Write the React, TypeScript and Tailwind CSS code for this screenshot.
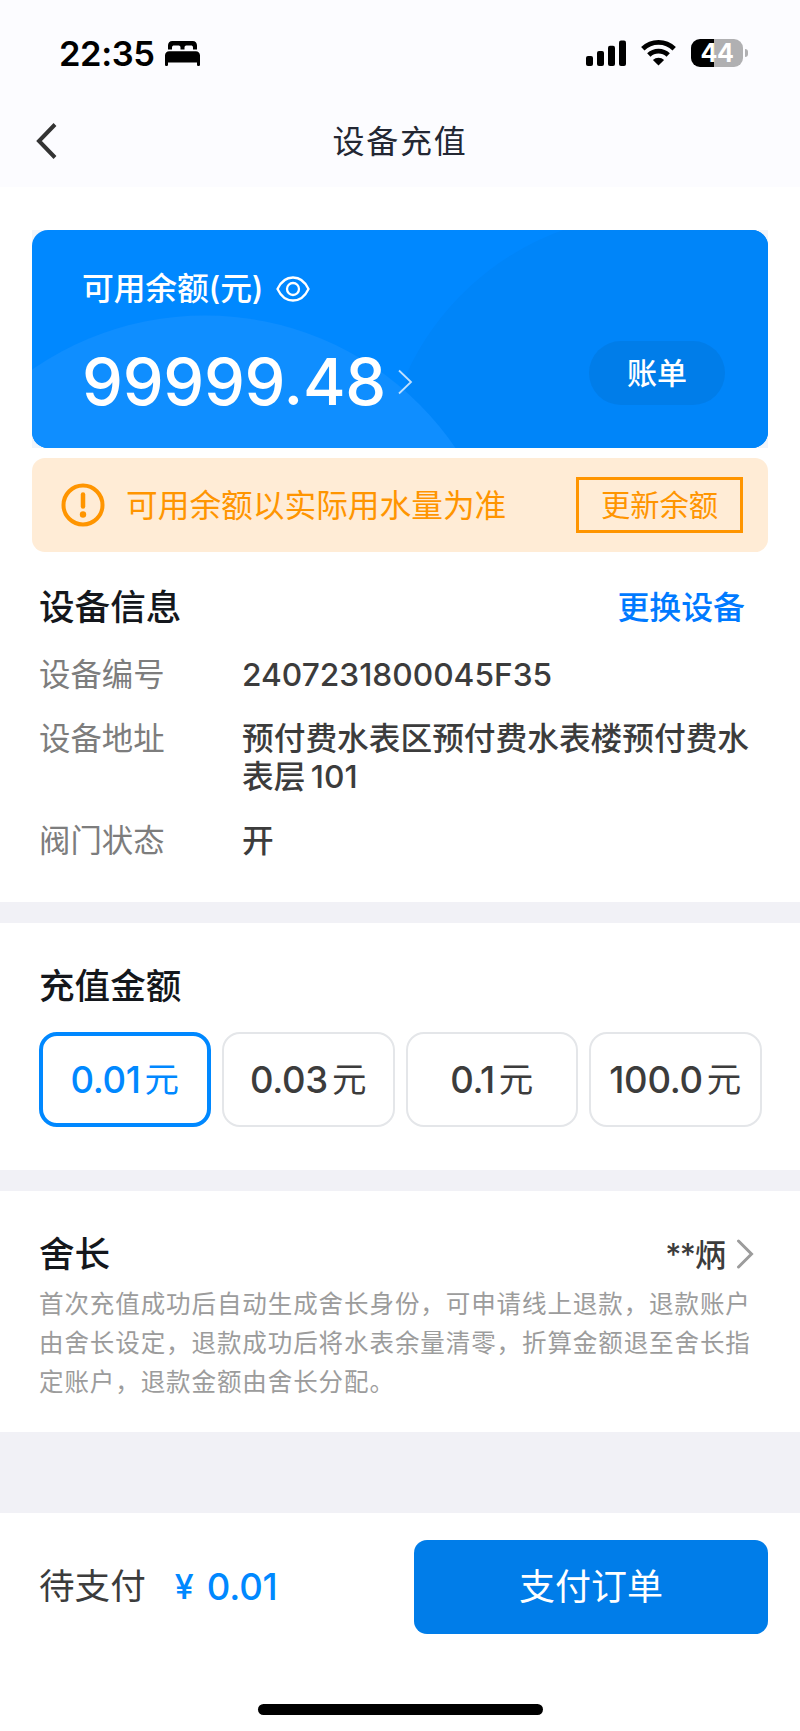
import React, { useState } from "react";

const amounts = ["0.01", "0.03", "0.1", "100.0"];

const deviceInfo = [
  { label: "设备编号", value: "2407231800045F35" },
  { label: "设备地址", value: "预付费水表区预付费水表楼预付费水表层\u2009101" },
  { label: "阀门状态", value: "开" },
];

const StatusBar: React.FC = () => (
  <div className="flex h-[94px] items-end justify-between pb-[20px] pl-[59px] pr-[52px] text-black">
    <div className="flex items-center">
      <span className="w-[95px] whitespace-nowrap text-[34.5px] font-[560] leading-[41px] tracking-[-0.4px]">22:35</span>
      <svg width="35" height="25" viewBox="0 0 35 25" className="ml-[11px]" fill="currentColor">
        <path d="M3 8.5V4.5C3 1.8 4.6 0 7.3 0H27.7C30.4 0 32 1.8 32 4.5V8.5H28V6.5C28 5 27 4.5 26 4.5H22C20.5 4.5 19.5 5 19.5 6.5V8.5H15.5V6.5C15.5 5 14.5 4.5 13 4.5H9C8 4.5 7 5 7 6.5V8.5Z" />
        <path d="M0 14.5C0 12 1.7 10.3 4.2 10.3H30.8C33.3 10.3 35 12 35 14.5V23.5C35 24.5 34.4 25 33.5 25S32 24.5 32 23.5V21.5H3V23.5C3 24.5 2.4 25 1.5 25S0 24.5 0 23.5Z" />
      </svg>
    </div>
    <div className="mb-[7px] flex items-center">
      <svg width="40" height="28" viewBox="0 0 40 28" fill="currentColor">
        <rect x="0" y="17" width="7" height="10" rx="2" />
        <rect x="11" y="12" width="7" height="15" rx="2" />
        <rect x="22" y="6.7" width="7" height="20.3" rx="2" />
        <rect x="33" y="1.5" width="7" height="25.5" rx="2" />
      </svg>
      <svg width="35" height="28" viewBox="0 0 35 28" className="ml-[15px]" fill="none" stroke="currentColor" strokeWidth="4.8">
        <path d="M1.8 9.8A22.5 22.5 0 0 1 33.2 9.8" />
        <path d="M7.8 16A14 14 0 0 1 27.2 16" />
        <path d="M17.5 26.5L11.9 20.9A8.2 8.2 0 0 1 23.1 20.9Z" fill="currentColor" stroke="none" />
      </svg>
      <div className="ml-[15px] flex h-[28px] w-[52px] items-center justify-center rounded-[9px] bg-[linear-gradient(to_right,#000_44.5%,#b0b0b2_44.5%)]">
        <span className="text-[25px] font-bold leading-[28px] tracking-[-0.5px] text-white">44</span>
      </div>
      <div className="ml-[2px] h-[8px] w-[3px] rounded-r-full bg-[#b0b0b2]" />
    </div>
  </div>
);

const BalanceCard: React.FC = () => (
  <div className="bg-[#f1f5fb]">
    <div className="relative h-[218px] overflow-hidden rounded-[16px] bg-[#0088ff] text-white">
      <svg className="absolute inset-0" width="736" height="218" viewBox="0 0 736 218">
        <path d="M531 0A275 275 0 0 0 374 145V218H736V0Z" fill="#0085f9" />
        <circle cx="173" cy="388.5" r="303" fill="#0f8eff" />
      </svg>
      <div className="relative flex h-full justify-between pl-[50px] pr-[43px]">
        <div>
          <div className="mt-[38px] flex items-center">
            <span className="w-[180px] whitespace-nowrap text-[31.8px] font-medium leading-[42px] tracking-[-0.15px]">可用余额(元)</span>
            <svg width="34" height="26" viewBox="0 0 34 26" className="ml-[14px]" fill="none" stroke="currentColor" strokeWidth="2.3">
              <path d="M1.5 13C5 5.5 10.5 1.5 17 1.5S29 5.5 32.5 13C29 20.5 23.5 24.5 17 24.5S5 20.5 1.5 13Z" />
              <circle cx="17" cy="13" r="6" />
            </svg>
          </div>
          <div className="mt-[32px] flex items-center">
            <span className="text-[65px] font-[540] leading-[80px] tracking-[-0.3px]">99999.48</span>
            <svg width="16" height="26" viewBox="0 0 16 26" className="ml-[12px]" fill="none" stroke="#bfe0ff" strokeWidth="1.8">
              <path d="M1 1.5L13 13L1 24.5" />
            </svg>
          </div>
        </div>
        <button className="mt-[111px] h-[64px] w-[136px] rounded-full bg-[#007de9] text-[30px] font-medium leading-[60px]">
          账单
        </button>
      </div>
    </div>
  </div>
);

const App: React.FC = () => {
  const [selected, setSelected] = useState(0);

  return (
    <div className="flex h-[1731px] w-[800px] flex-col bg-[#f1f1f6] font-['Inter','Noto_Sans_CJK_SC',sans-serif] text-[#3c3c3c]">
      <header className="h-[187px] bg-[#fcfcff]">
        <StatusBar />
        <div className="flex h-[93px] items-center px-[36px]">
          <svg width="22" height="36" viewBox="0 0 22 36" fill="none" stroke="#333" strokeWidth="4">
            <path d="M19 1.5L3 18L19 34.5" />
          </svg>
          <h1 className="mr-[22px] flex-1 pt-[2px] text-center text-[32px] leading-[44px] tracking-[1.8px] text-[#232733]">设备充值</h1>
        </div>
      </header>

      <section className="h-[715px] bg-white px-[32px] pt-[43px]">
        <BalanceCard />

        <div className="mt-[10px] flex h-[94px] items-center rounded-[13px] bg-[#ffecd6] pl-[29px] pr-[25px] text-[#ff9500]">
          <svg width="44" height="44" viewBox="0 0 44 44" fill="none" stroke="currentColor">
            <circle cx="22" cy="22" r="19.5" strokeWidth="4" />
            <path d="M22 11.5V23.5" strokeWidth="4.5" strokeLinecap="round" />
            <circle cx="22" cy="31.5" r="3.2" fill="currentColor" stroke="none" />
          </svg>
          <span className="ml-[21px] pt-[2px] text-[31.7px] leading-[44px]">可用余额以实际用水量为准</span>
          <button className="ml-auto h-[56px] w-[167px] border-[3px] border-[#ff9500] pt-[1px] text-[29.3px] leading-[49px]">更新余额</button>
        </div>

        <div className="px-[7px]">
          <div className="mt-[33px] flex h-[46px] items-center justify-between pr-[16px] font-medium">
            <h2 className="text-[35.6px] leading-[46px] text-[#14171c]">设备信息</h2>
            <a className="text-[31.9px] leading-[46px] text-[#007aff]">更换设备</a>
          </div>
          <div className="mt-[25px] flex flex-col gap-[26px] leading-[38px]">
            {deviceInfo.map((item) => (
              <div key={item.label} className="flex">
                <span className="w-[203px] text-[31.4px] text-[#7d7d7d]">{item.label}</span>
                <span className="flex-1 text-[31.7px] font-[450]">{item.value}</span>
              </div>
            ))}
          </div>
        </div>
      </section>

      <section className="mt-[21px] h-[247px] bg-white px-[39px] pt-[41px]">
        <h2 className="text-[35.6px] font-medium leading-[46px] text-[#14171c]">充值金额</h2>
        <div className="-ml-[0.5px] mt-[22px] flex gap-[11px]">
          {amounts.map((amount, i) => (
            <button
              key={amount}
              onClick={() => setSelected(i)}
              className={`flex h-[95px] w-[172.5px] shrink-0 items-center justify-center rounded-[18px] leading-[46px] ${
                i === selected ? "border-4 border-[#0088ff] text-[#0088ff]" : "border-2 border-[#e4e6e9]"
              }`}
            >
              <span className="text-[36.5px] font-[450] tracking-[-0.3px]">{amount}</span>
              <span className="ml-[4px] pt-[1px] text-[34.5px]">元</span>
            </button>
          ))}
        </div>
      </section>

      <section className="mt-[21px] h-[241px] bg-white px-[39px] pt-[41px]">
        <div className="flex h-[46px] items-center">
          <h2 className="text-[35.6px] font-medium leading-[46px] text-[#14171c]">舍长</h2>
          <span className="ml-auto text-[31px] font-[450] leading-[44px]">
            <span className="tracking-[-1.8px]">**</span>
            <span className="ml-[1px]">炳</span>
          </span>
          <svg width="18" height="30" viewBox="0 0 18 30" className="mb-[2px] ml-[10px] mr-[7px]" fill="none" stroke="#9c9c9c" strokeWidth="3" strokeLinecap="round">
            <path d="M2.5 2L15.5 15L2.5 28" />
          </svg>
        </div>
        <p className="mt-[7px] w-[724px] text-[24.5px] leading-[38.8px] tracking-[0.92px] text-[#9c9c9c]">
          首次充值成功后自动生成舍长身份，可申请线上退款，退款账户由舍长设定，退款成功后将水表余量清零，折算金额退至舍长指定账户，退款金额由舍长分配。
        </p>
      </section>

      <footer className="mt-auto flex h-[218px] flex-col bg-white">
        <div className="flex h-[147px] items-center pl-[39px] pr-[32px]">
          <span className="pt-[1px] text-[35.6px] leading-[46px]">待支付</span>
          <span className="ml-[29px] text-[34px] font-[450] leading-[46px] text-[#0088ff]">¥</span>
          <span className="ml-[13px] text-[36.5px] font-[450] leading-[46px] tracking-[-0.1px] text-[#0088ff]">0.01</span>
          <button className="ml-auto h-[94px] w-[354px] rounded-[13px] bg-[#007de9] pt-[1px] text-[36px] leading-[46px] text-white">支付订单</button>
        </div>
        <div className="mx-auto mt-[44px] h-[11px] w-[285px] rounded-full bg-black" />
      </footer>
    </div>
  );
};

export default App;
